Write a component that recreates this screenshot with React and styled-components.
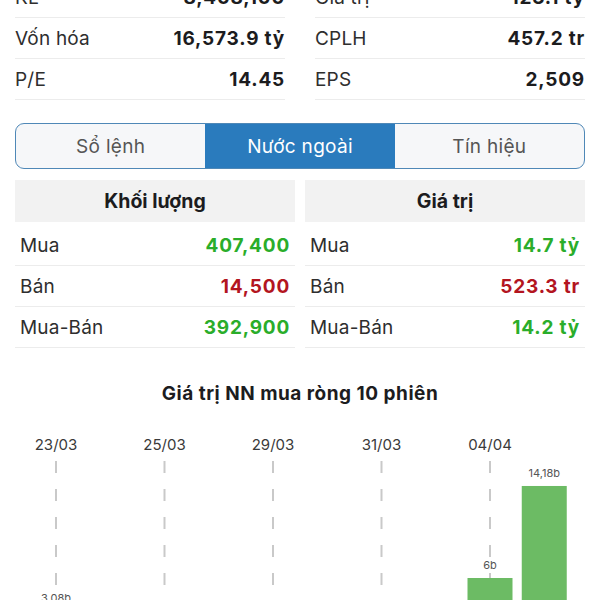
import React from 'react'
import styled, { createGlobalStyle } from 'styled-components'

const GlobalStyle = createGlobalStyle`
    html, body {
        margin: 0;
        padding: 0;
        background: #ffffff;
        overflow: hidden;
    }
    body {
        font-family: Inter, "Noto Sans", "Liberation Sans", sans-serif;
        color: #1c1c1e;
    }
`;

const stats = [
    { label: 'KL', value: '8,408,100' },
    { label: 'Giá trị', value: '123.1 tỷ' },
    { label: 'Vốn hóa', value: '16,573.9 tỷ' },
    { label: 'CPLH', value: '457.2 tr' },
    { label: 'P/E', value: '14.45' },
    { label: 'EPS', value: '2,509' },
]

const tabs = ['Sổ lệnh', 'Nước ngoài', 'Tín hiệu']

const foreign = [
    {
        title: 'Khối lượng',
        rows: [
            { label: 'Mua', value: '407,400', tone: 'up' },
            { label: 'Bán', value: '14,500', tone: 'down' },
            { label: 'Mua-Bán', value: '392,900', tone: 'up' },
        ],
    },
    {
        title: 'Giá trị',
        rows: [
            { label: 'Mua', value: '14.7 tỷ', tone: 'up' },
            { label: 'Bán', value: '523.3 tr', tone: 'down' },
            { label: 'Mua-Bán', value: '14.2 tỷ', tone: 'up' },
        ],
    },
]

// net foreign buy value per session (billion), oldest first
const sessions = [
    { date: '23/03', value: 3.08, label: '3,08b' },
    { date: '24/03', value: -1.2 },
    { date: '25/03', value: -0.6 },
    { date: '28/03', value: 0.4 },
    { date: '29/03', value: -2.1 },
    { date: '30/03', value: 0.8 },
    { date: '31/03', value: -0.9 },
    { date: '01/04', value: 1.1 },
    { date: '04/04', value: 6, label: '6b' },
    { date: '05/04', value: 14.18, label: '14,18b' },
]

function NetBuyChart() {
    const step = 54.25
    const x0 = 56
    const zero = 226.5
    const perUnit = 11.25
    const barW = 45

    return (
        <ChartSvg width="600" height="190" viewBox="0 0 600 190">
            {sessions.map((s, i) => {
                if (i % 2 !== 0) return null
                const x = x0 + step * i
                return (
                    <g key={s.date}>
                        <DateLabel x={x} y={31} textAnchor="middle">{s.date}</DateLabel>
                        <line x1={x} y1={42} x2={x} y2={190} stroke="#c9c9c9" strokeWidth="2" strokeDasharray="12 16" />
                    </g>
                )
            })}
            {sessions.map((s, i) => {
                const cx = x0 + step * i
                const h = Math.abs(s.value) * perUnit
                const top = s.value >= 0 ? zero - h : zero
                return (
                    <g key={'b' + s.date}>
                        <rect x={cx - barW / 2} y={top} width={barW} height={h} fill={s.value >= 0 ? '#6cbb64' : '#e06a63'} />
                        {s.label && (
                            <ValueLabel x={cx} y={top - 9} textAnchor="middle">{s.label}</ValueLabel>
                        )}
                    </g>
                )
            })}
        </ChartSvg>
    )
}

function App() {
    return (
        <Page>
            <GlobalStyle />
            <StatsGrid>
                {stats.map((s) => (
                    <StatRow key={s.label}>
                        <span>{s.label}</span>
                        <strong>{s.value}</strong>
                    </StatRow>
                ))}
            </StatsGrid>

            <TabBar>
                {tabs.map((t, i) => (
                    <Tab key={t} $active={i === 1}>{t}</Tab>
                ))}
            </TabBar>

            <ForeignGrid>
                {foreign.map((col) => (
                    <div key={col.title}>
                        <ColumnHeader>{col.title}</ColumnHeader>
                        {col.rows.map((r) => (
                            <DataRow key={r.label}>
                                <span>{r.label}</span>
                                <Value $tone={r.tone}>{r.value}</Value>
                            </DataRow>
                        ))}
                    </div>
                ))}
            </ForeignGrid>

            <ChartTitle>Giá trị NN mua ròng 10 phiên</ChartTitle>
            <NetBuyChart />
        </Page>
    )
}

const Page = styled.div`
    margin-top: -23px;
    width: 600px;
`;

const StatsGrid = styled.div`
    display: grid;
    grid-template-columns: 1fr 1fr;
    column-gap: 30px;
    padding: 0 15px;
`;

const StatRow = styled.div`
    display: flex;
    justify-content: space-between;
    align-items: center;
    height: 40px;
    border-bottom: 1px solid #ececec;
    font-size: 19px;
    letter-spacing: 0.2px;
    color: #2e2e2e;

    strong {
        font-weight: 700;
        letter-spacing: 0.8px;
        color: #1c1c1e;
    }
`;

const TabBar = styled.div`
    display: grid;
    grid-template-columns: repeat(3, 1fr);
    margin: 23px 15px 0;
    height: 44px;
    border: 1.5px solid #4f88b7;
    border-radius: 9px;
    overflow: hidden;
    background: #f6f7f9;
`;

const Tab = styled.div`
    display: flex;
    align-items: center;
    justify-content: center;
    font-size: 19px;
    letter-spacing: 0.3px;
    color: ${(p) => (p.$active ? '#ffffff' : '#555555')};
    background: ${(p) => (p.$active ? '#2a7bbd' : 'transparent')};
`;

const ForeignGrid = styled.div`
    display: grid;
    grid-template-columns: 1fr 1fr;
    column-gap: 10px;
    padding: 0 15px;
    margin-top: 11px;
`;

const ColumnHeader = styled.div`
    display: flex;
    align-items: center;
    justify-content: center;
    height: 42px;
    margin-bottom: 3px;
    background: #f2f2f2;
    font-size: 19.5px;
    font-weight: 700;
    color: #1c1c1e;
`;

const DataRow = styled.div`
    display: flex;
    justify-content: space-between;
    align-items: center;
    height: 40px;
    padding: 0 5px;
    border-bottom: 1px solid #ececec;
    font-size: 19px;
    letter-spacing: 0.2px;
    color: #2e2e2e;

    &:first-of-type {
        height: 41px;
    }
`;

const Value = styled.span`
    font-weight: 700;
    letter-spacing: 0.8px;
    color: ${(p) => (p.$tone === 'down' ? '#b3151f' : '#2aad2a')};
`;

const ChartTitle = styled.h2`
    margin: 34px 0 0;
    text-align: center;
    font-size: 19px;
    font-weight: 700;
    letter-spacing: 0.5px;
    color: #1c1c1e;
    line-height: 24px;
`;

const ChartSvg = styled.svg`
    display: block;
    margin-top: 13px;
`;

const DateLabel = styled.text`
    font-family: Inter, "Noto Sans", sans-serif;
    font-size: 15px;
    fill: #3a3a3a;
`;

const ValueLabel = styled.text`
    font-family: Inter, "Noto Sans", sans-serif;
    font-size: 11px;
    fill: #555555;
`;

export default App
